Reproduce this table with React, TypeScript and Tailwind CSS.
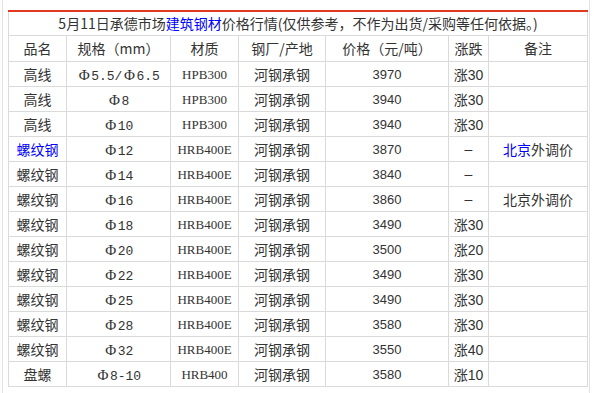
import React from 'react'

const cols = 'grid grid-cols-[58px_104px_68px_87px_123px_40px_99px]'

type Row = {
  name: string
  spec: string
  grade: string
  mill: string
  price: string
  change: string
  note?: string
  blueName?: boolean
  blueNote?: boolean
}

const rows: Row[] = [
  { name: '高线', spec: 'Φ5.5/Φ6.5', grade: 'HPB300', mill: '河钢承钢', price: '3970', change: '涨30' },
  { name: '高线', spec: 'Φ8', grade: 'HPB300', mill: '河钢承钢', price: '3940', change: '涨30' },
  { name: '高线', spec: 'Φ10', grade: 'HPB300', mill: '河钢承钢', price: '3940', change: '涨30' },
  { name: '螺纹钢', spec: 'Φ12', grade: 'HRB400E', mill: '河钢承钢', price: '3870', change: '-', note: '北京外调价', blueName: true, blueNote: true },
  { name: '螺纹钢', spec: 'Φ14', grade: 'HRB400E', mill: '河钢承钢', price: '3840', change: '-' },
  { name: '螺纹钢', spec: 'Φ16', grade: 'HRB400E', mill: '河钢承钢', price: '3860', change: '-', note: '北京外调价' },
  { name: '螺纹钢', spec: 'Φ18', grade: 'HRB400E', mill: '河钢承钢', price: '3490', change: '涨30' },
  { name: '螺纹钢', spec: 'Φ20', grade: 'HRB400E', mill: '河钢承钢', price: '3500', change: '涨20' },
  { name: '螺纹钢', spec: 'Φ22', grade: 'HRB400E', mill: '河钢承钢', price: '3490', change: '涨30' },
  { name: '螺纹钢', spec: 'Φ25', grade: 'HRB400E', mill: '河钢承钢', price: '3490', change: '涨30' },
  { name: '螺纹钢', spec: 'Φ28', grade: 'HRB400E', mill: '河钢承钢', price: '3580', change: '涨30' },
  { name: '螺纹钢', spec: 'Φ32', grade: 'HRB400E', mill: '河钢承钢', price: '3550', change: '涨40' },
  { name: '盘螺', spec: 'Φ8-10', grade: 'HRB400', mill: '河钢承钢', price: '3580', change: '涨10' },
]

const cell = 'flex items-center justify-center border-r border-[#dadada] whitespace-nowrap'
const cjk = "font-['Noto_Sans_CJK_SC',sans-serif] text-[14px]"

function Spec({ text }: { text: string }) {
  // Φ is full width in the original, digits half width
  const parts = text.split(/(Φ)/)
  return (
    <span>
      {parts.map((p, i) =>
        p === 'Φ' ? (
          <span key={i} className="inline-block w-[14px] text-center font-['Liberation_Serif',serif] text-[15px]">Φ</span>
        ) : (
          <span key={i} className="font-['Liberation_Mono',monospace] text-[13px]">{p}</span>
        )
      )}
    </span>
  )
}

function Change({ text }: { text: string }) {
  if (text === '-') return <span className="font-['Liberation_Sans',sans-serif] text-[14px]">–</span>
  return (
    <span>
      <span className={cjk}>{text.slice(0, 1)}</span>
      <span className="font-['Liberation_Sans',sans-serif] text-[14px]">{text.slice(1)}</span>
    </span>
  )
}

export default function App() {
  return (
    <div className="ml-[2px] w-[588px] min-h-[393px] border-x border-[#e3e3e3] bg-white pt-[10px] text-[#333]">
      <div className="ml-[5px] w-[580px] border-t-2 border-[#e0391f]">
        <div className="border-l border-[#dadada]">
          {/* title */}
          <div className={`flex h-[24px] items-center justify-center border-r border-b border-[#dadada] ${cjk}`}>
            5月11日承德市场<span className="text-[#0000ff]">建筑钢材</span>价格行情(仅供参考，不作为出货/采购等任何依据。)
          </div>

          {/* header */}
          <div className={`${cols} h-[26px] border-b border-[#dadada] ${cjk}`}>
            <div className={cell}>品名</div>
            <div className={cell}>规格（mm）</div>
            <div className={cell}>材质</div>
            <div className={cell}>钢厂/产地</div>
            <div className={cell}>价格（元/吨）</div>
            <div className={cell}>涨跌</div>
            <div className={cell}>备注</div>
          </div>

          {rows.map((r, i) => (
            <div key={i} className={`${cols} h-[25px] border-b border-[#dadada]`}>
              <div className={`${cell} ${cjk} ${r.blueName ? 'text-[#0000ff]' : ''}`}>{r.name}</div>
              <div className={cell}>
                <Spec text={r.spec} />
              </div>
              <div className={`${cell} font-['Liberation_Serif',serif] text-[13px]`}>{r.grade}</div>
              <div className={`${cell} ${cjk}`}>{r.mill}</div>
              <div className={`${cell} font-['Liberation_Sans',sans-serif] text-[13px]`}>{r.price}</div>
              <div className={cell}>
                <Change text={r.change} />
              </div>
              <div className={`${cell} ${cjk}`}>
                {r.note ? (
                  r.blueNote ? (
                    <>
                      <span className="text-[#0000ff]">北京</span>外调价
                    </>
                  ) : (
                    r.note
                  )
                ) : null}
              </div>
            </div>
          ))}
        </div>
      </div>
    </div>
  )
}
